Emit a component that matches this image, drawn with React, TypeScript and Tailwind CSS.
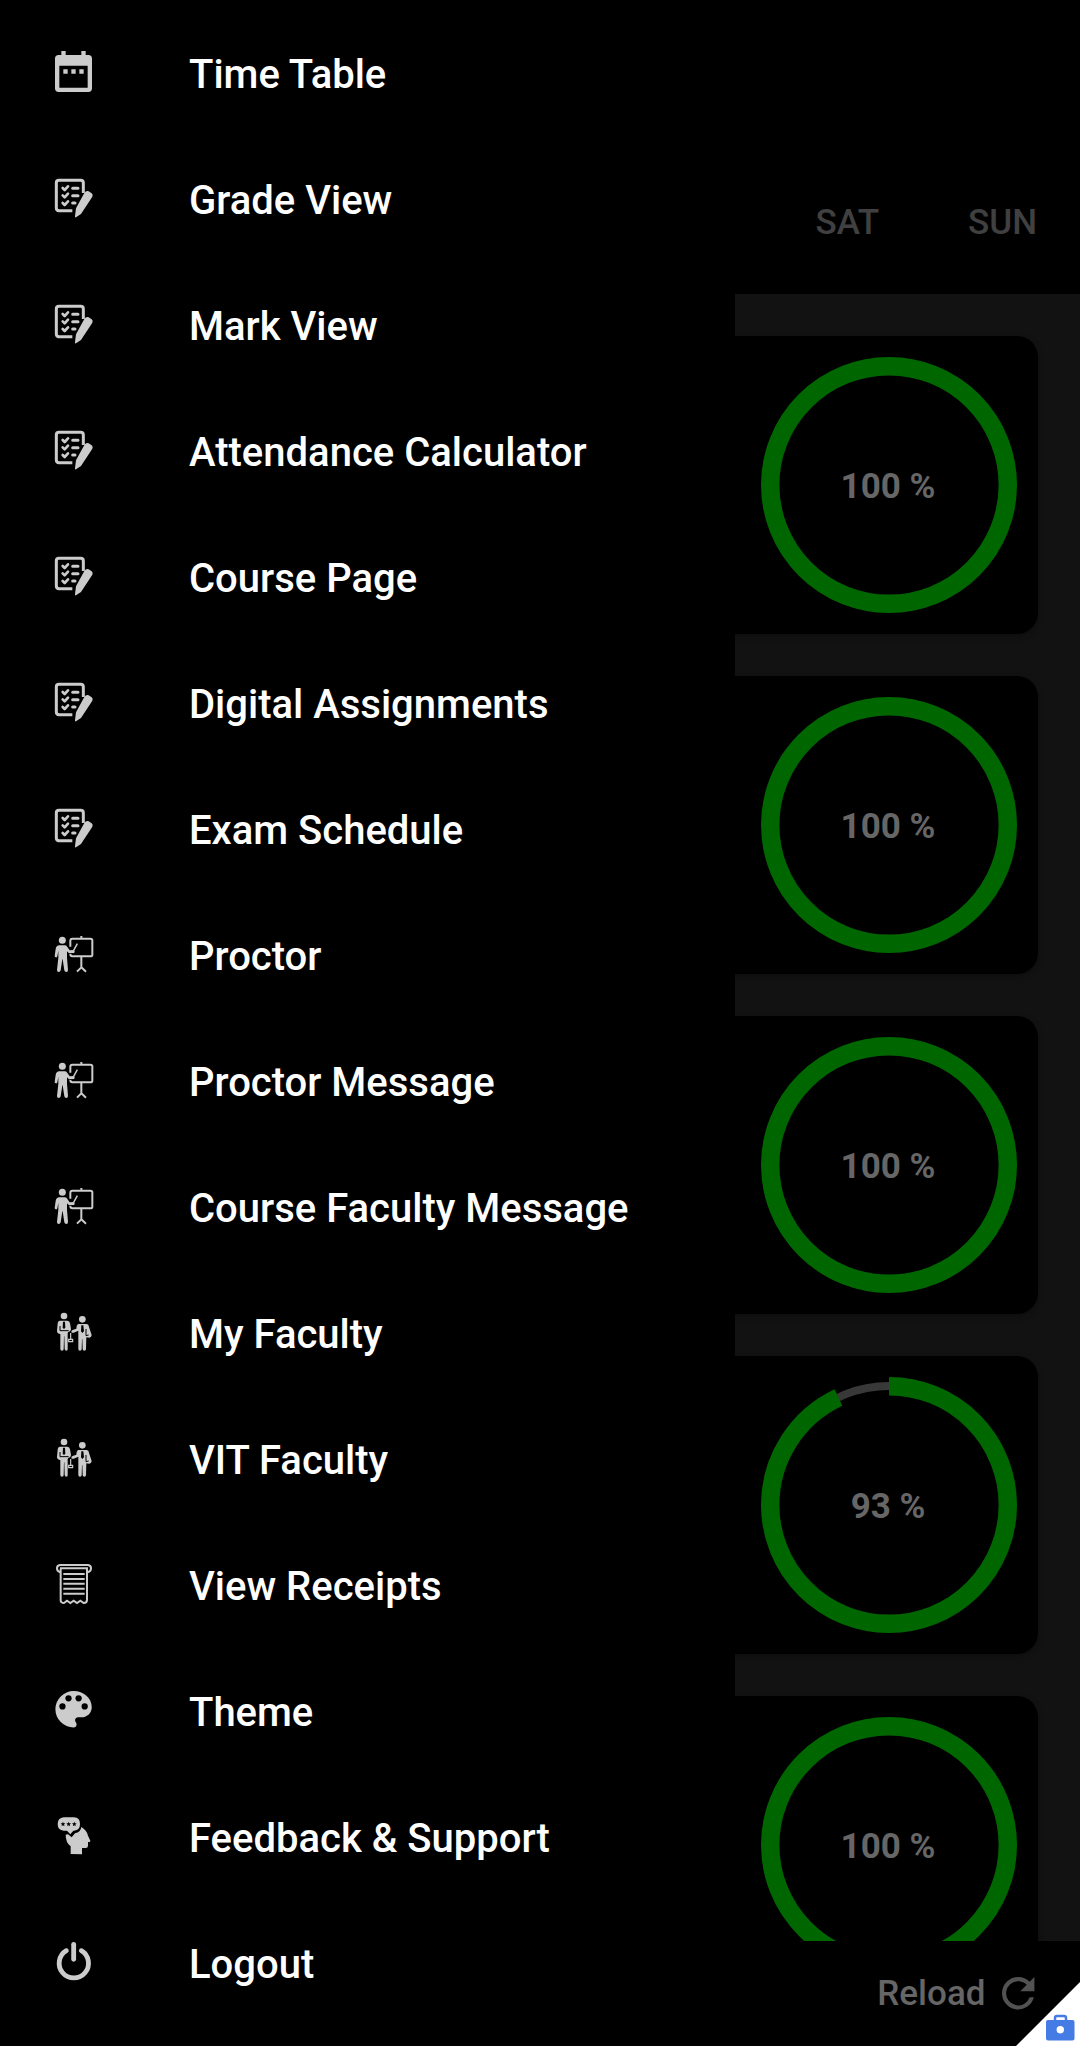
import React from "react";

type IconName = "calendar" | "checklist" | "proctor" | "faculty" | "receipt" | "palette" | "feedback" | "power";

const menu: { label: string; icon: IconName }[] = [
  { label: "Time Table", icon: "calendar" },
  { label: "Grade View", icon: "checklist" },
  { label: "Mark View", icon: "checklist" },
  { label: "Attendance Calculator", icon: "checklist" },
  { label: "Course Page", icon: "checklist" },
  { label: "Digital Assignments", icon: "checklist" },
  { label: "Exam Schedule", icon: "checklist" },
  { label: "Proctor", icon: "proctor" },
  { label: "Proctor Message", icon: "proctor" },
  { label: "Course Faculty Message", icon: "proctor" },
  { label: "My Faculty", icon: "faculty" },
  { label: "VIT Faculty", icon: "faculty" },
  { label: "View Receipts", icon: "receipt" },
  { label: "Theme", icon: "palette" },
  { label: "Feedback & Support", icon: "feedback" },
  { label: "Logout", icon: "power" },
];

const attendance = [100, 100, 100, 93, 100];

const ink = "#cccccc";
const star = "M0-7 2-2.2 7-2 3.2 1.4 4.4 6.4 0 3.6-4.4 6.4-3.2 1.4-7-2-2-2.2Z";

const drawings: Record<IconName, { top: number; art: React.ReactNode }> = {
  calendar: {
    top: -3,
    art: (
      <>
        <path fillRule="evenodd" d="M64 33h13v12h47V33h13v12h8q11 0 11 11v89q0 11-11 11H56q-11 0-11-11V56q0-11 11-11h8ZM58 77v66h85V77Z" />
        <path d="M70 88h13v13H70ZM94 88h13v13H94ZM118 88h13v13h-13Z" />
      </>
    ),
  },
  checklist: {
    top: 0,
    art: (
      <>
        <path fill="none" stroke={ink} strokeWidth="9" d="M130 84V54q0-8-8-8H57q-8 0-8 8v75q0 8 8 8h40" />
        <path fill="none" stroke={ink} strokeWidth="8" strokeLinecap="round" strokeLinejoin="round" d="m68 69 6 6 10-11M68 91l6 6 10-11M68 114l6 6 10-11" />
        <path fill="none" stroke={ink} strokeWidth="9" strokeLinecap="round" d="M98 70h16M98 92h16M98 114h7" />
        <path d="M133 84q5-8 13-5l9 6q5 4 2 10l-34 52-15 10q-4 1-3-4l3-23Z" />
      </>
    ),
  },
  proctor: {
    top: 3,
    art: (
      <>
        <circle cx="67" cy="61" r="10.5" />
        <path d="M59 76h16q5 0 7 5l7 10 12-1q4 2 3 6l-2 3-15 1-6-6v19l3 37q0 6-5 6t-6-5l-5-33h-1l-5 33q-1 5-6 5t-5-6l4-37V92l-3 17q-1 4-4 3-4 0-4-4l3-21q2-11 11-11Z" />
        <path fill="none" stroke={ink} strokeWidth="6" d="M91 80V62q0-6 6-6h54q6 0 6 5v43q0 5-6 5H97q-6 0-6-7M124 48v8M124 109v35M124 142l-13 13M124 142l14 13" />
        <path stroke={ink} strokeWidth="4.5" d="m101 91 11-20" />
      </>
    ),
  },
  faculty: {
    top: -3,
    art: (
      <>
        <circle cx="72" cy="48" r="10" />
        <circle cx="127" cy="58" r="10" />
        <path d="M60 62h22q7 0 8 8l3 18q0 6-8 8l-2 3v48q0 5-4 5t-5-5l-1-38h-1l-1 38q0 5-5 5t-5-5V102q-10-1-10-9l2-22q1-9 7-9Z" />
        <path d="M116 72h23q7 0 8 9l8 24q0 7-7 8l-9-1-1 35q0 5-5 5t-5-5l-1-30h-1l-1 30q0 5-5 5t-5-5V92l-14 6q-6 2-7-3 0-3 4-5l11-4q1-14 7-14Z" />
        <path fill="#000" d="M69 65h6l1 18-4 4-4-4ZM124 76h6l2 18-5 5-4-5Z" />
        <path stroke="#000" strokeWidth="3" fill="none" d="M60 78v14h26M138 87v20l8-2" />
        <path fill="none" stroke={ink} strokeWidth="3.5" d="M92 99v18M86 118h12v7H86Z" />
      </>
    ),
  },
  receipt: {
    top: 3,
    art: (
      <g fill="none" stroke={ink} strokeWidth="6">
        <path d="M62 66h-3q-8-2-8-11t9-10h84q9 1 9 10t-8 11h-4M60 55h84" />
        <path d="M62 56v96q0 4 5 6l5 1 9-7 10 7 10-7 10 7 10-7 10 7q10 0 10-10V56" />
        <path d="M70 72h64M70 87h64M70 101h64M70 116h64M70 131h64" />
      </g>
    ),
  },
  palette: {
    top: 6,
    art: (
      <g transform="translate(28 30) scale(6.06)">
        <path d="M12 3a9 9 0 0 0 0 18c.83 0 1.5-.67 1.5-1.5 0-.39-.15-.74-.39-1.01-.23-.26-.38-.61-.38-.99 0-.83.67-1.5 1.5-1.5H16c2.76 0 5-2.24 5-5 0-4.42-4.03-8-9-8Z" />
        <g fill="#000">
          <circle cx="6.5" cy="10.6" r="1.55" />
          <circle cx="9.5" cy="6.6" r="1.55" />
          <circle cx="14.5" cy="6.6" r="1.55" />
          <circle cx="17.5" cy="10.6" r="1.55" />
        </g>
      </g>
    ),
  },
  feedback: {
    top: 9,
    art: (
      <>
        <path d="M71 52h31q18 1 18 20t-18 20h-2l-9 11-10-11H71Q53 90 53 72t18-20Z" />
        <path d="M124 81q16 9 20 26l7 15q1 3-3 4h-4v11q0 7-7 7h-11v19l-34-1v-23Q77 128 77 104l7-1 11 9 10-12q17-3 19-19Z" />
        <g fill="#000">
          <path transform="translate(69 72)" d={star} />
          <path transform="translate(86 72)" d={star} />
          <path transform="translate(103 72)" d={star} />
        </g>
      </>
    ),
  },
  power: {
    top: 12,
    art: (
      <g fill="none" stroke={ink} strokeWidth="14.5" strokeLinecap="round">
        <path d="M101 58v45" />
        <path d="M79 77a44 44 0 1 0 45 0" />
      </g>
    ),
  },
};

function MenuIcon({ name }: { name: IconName }) {
  const { top, art } = drawings[name];
  return (
    <svg className="ml-10 size-[70px] shrink-0" viewBox={`0 ${top} 210 210`} fill={ink}>
      {art}
    </svg>
  );
}

function AttendanceCard({ value }: { value: number }) {
  return (
    <div className="flex h-[298px] shrink-0 items-center justify-end rounded-[21px] bg-black pr-[21px] shadow-[0_2px_6px_rgba(0,0,0,0.3)]">
      <div className="grid size-64 place-items-center">
        <svg className="col-start-1 row-start-1 size-64 -rotate-90" viewBox="0 0 256 256" fill="none">
          <circle cx="128" cy="128" r="119" stroke="#383838" strokeWidth="8" />
          <circle
            cx="128"
            cy="128"
            r="118.8"
            stroke="#006600"
            strokeWidth="18.4"
            pathLength="100"
            strokeDasharray={value < 100 ? `${value} 100` : undefined}
          />
        </svg>
        <span className="col-start-1 row-start-1 pt-[2px] pr-[2px] text-[35px] leading-none font-bold text-[#666666]">
          {value} %
        </span>
      </div>
    </div>
  );
}

export default function App() {
  return (
    <div className="relative h-[2046px] w-[1080px] overflow-hidden bg-black font-['Roboto',sans-serif]">
      <main className="flex h-full flex-col">
        <header className="flex h-[294px] shrink-0 justify-end gap-[89px] pt-[202px] pr-[43px] text-[35px] leading-[42px] font-medium text-[#404040]">
          <span>SAT</span>
          <span>SUN</span>
        </header>
        <section className="flex min-h-0 flex-1 flex-col gap-[42px] overflow-hidden bg-[#121212] px-[42px] pt-[42px]">
          {attendance.map((value, i) => (
            <AttendanceCard key={i} value={value} />
          ))}
        </section>
        <footer className="flex h-[105px] shrink-0 items-center justify-end gap-[8px] bg-black pr-[38px]">
          <span className="pt-[2px] text-[35px] font-medium text-[#666666]">Reload</span>
          <svg className="size-[48.5px] text-[#525252]" viewBox="0 0 24 24" fill="currentColor">
            <path d="M17.65 6.35A7.96 7.96 0 0 0 12 4a8 8 0 1 0 7.73 10h-2.08A6 6 0 1 1 12 6c1.66 0 3.14.69 4.22 1.78L13 11h7V4Z" />
          </svg>
        </footer>
      </main>

      <nav className="absolute inset-y-0 left-0 w-[735px] bg-black pt-[11px]">
        {menu.map(({ label, icon }) => (
          <a key={label} className="flex h-[126px] items-center gap-[79px]">
            <MenuIcon name={icon} />
            <span className="pt-[2px] text-[40px] leading-none font-medium whitespace-nowrap text-white">{label}</span>
          </a>
        ))}
      </nav>

      <div className="absolute right-0 bottom-0 size-16">
        <svg className="size-16" viewBox="0 0 64 64">
          <path fill="#fff" d="M64 0v64H0Z" />
          <path fill="none" stroke="#457be5" strokeWidth="2.5" d="M39 40v-4q0-2 2-2h7q2 0 2 2v4" />
          <rect x="30" y="38" width="28.5" height="20.5" rx="2" fill="#457be5" />
          <circle cx="44.3" cy="47.7" r="3.7" fill="#fff" />
        </svg>
      </div>
    </div>
  );
}
